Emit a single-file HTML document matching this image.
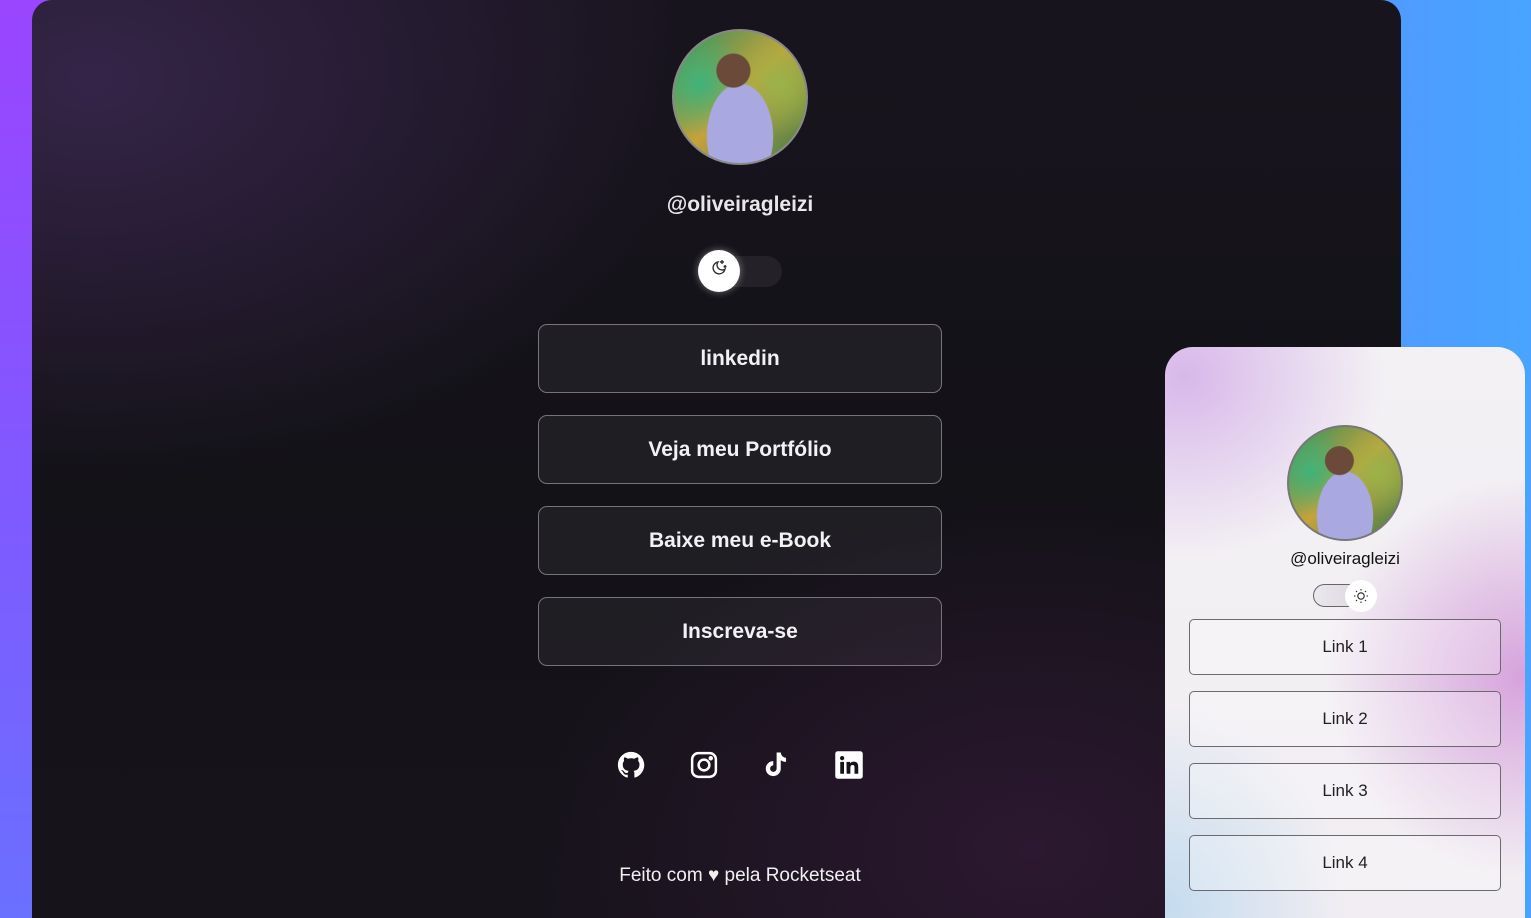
<!DOCTYPE html>
<html><head><meta charset="utf-8"><style>
*{margin:0;padding:0;box-sizing:border-box}
html,body{width:1531px;height:918px;overflow:hidden}
body{position:relative;font-family:"Liberation Sans",sans-serif;background:linear-gradient(90deg,#9a45ff 0%,#7a62ff 40%,#5a8cff 75%,#48a4ff 100%)}
.bgl{position:absolute;left:0;top:0;width:40px;height:918px;background:linear-gradient(180deg,#9a45ff,#7d5cff 60%,#6a70ff)}
.dark{position:absolute;left:32px;top:0;width:1369px;height:960px;border-radius:20px;background:radial-gradient(ellipse 600px 400px at 60px 80px,#352448 0%,rgba(30,22,40,0) 100%),radial-gradient(ellipse 500px 350px at 1000px 850px,#2c1830 0%,rgba(0,0,0,0) 100%),linear-gradient(180deg,#18141e,#131217 50%,#17131b);}
.av{position:absolute;border-radius:50%;overflow:hidden;border:2px solid #888;background:radial-gradient(circle at 45% 30%,#6b4a3a 0 14%,transparent 15%),radial-gradient(ellipse at 50% 80%,#a9a8e0 0 35%,transparent 36%),radial-gradient(circle at 20% 40%,#3fb37a,transparent 40%),radial-gradient(circle at 80% 40%,#9ab34a,transparent 40%),linear-gradient(135deg,#2e8f5f,#c7a23a 50%,#3c7c4c)}
.h{position:absolute;left:540px;width:400px;text-align:center;color:#e8e8ea;font-size:21px;font-weight:bold}
.btn{position:absolute;left:538px;width:404px;height:69px;border:1.5px solid #76747a;border-radius:9px;background:rgba(255,255,255,0.05);color:#f2f2f4;font-size:21px;font-weight:bold;display:flex;align-items:center;justify-content:center}
.light{position:absolute;left:1165px;top:347px;width:360px;height:600px;border-radius:28px;background:radial-gradient(ellipse 200px 180px at 20px 30px,#d8b8ea,transparent),radial-gradient(ellipse 200px 200px at 360px 330px,#d6a2dc,transparent),radial-gradient(ellipse 180px 200px at 0px 560px,#c4dcef,transparent),linear-gradient(#f3f1f4,#f1edf2)}
.lb{position:absolute;width:312px;height:56px;border:1px solid #6d6a6f;border-radius:5px;background:rgba(255,255,255,0.25);color:#222;font-size:17px;display:flex;align-items:center;justify-content:center}
</style></head><body>
<div class="bgl"></div>
<div class="dark"></div>
<div class="av" style="left:672px;top:29px;width:136px;height:136px"></div>
<div class="h" style="top:193px">@oliveiragleizi</div>
<div style="position:absolute;left:718px;top:256px;width:64px;height:31px;border-radius:16px;background:#242228"></div>
<div style="position:absolute;left:698px;top:250px;width:42px;height:42px;border-radius:50%;background:#fff;box-shadow:0 0 8px rgba(255,255,255,.4)"></div>
<svg style="position:absolute;left:709px;top:258px" width="20" height="20" viewBox="0 0 20 20" fill="none" stroke="#333" stroke-width="1.4"><path d="M9 4a6 6 0 1 0 7 7a5 5 0 0 1-7-7z"/><path d="M13 2v4M11 4h4M16 7v3M14.5 8.5h3"/></svg>
<div class="btn" style="top:324px">linkedin</div>
<div class="btn" style="top:415px">Veja meu Portfólio</div>
<div class="btn" style="top:506px">Baixe meu e-Book</div>
<div class="btn" style="top:597px">Inscreva-se</div>
<svg style="position:absolute;left:616px;top:750px" width="30" height="30" viewBox="0 0 24 24" fill="#fff"><path d="M12 1.5C6.2 1.5 1.5 6.2 1.5 12c0 4.6 3 8.6 7.2 10 .5.1.7-.2.7-.5v-1.8c-2.9.6-3.5-1.4-3.5-1.4-.5-1.2-1.2-1.5-1.2-1.5-1-.7.1-.7.1-.7 1 .1 1.6 1.1 1.6 1.1.9 1.6 2.5 1.2 3.1.9.1-.7.4-1.200.7-1.4-2.3-.3-4.8-1.2-4.8-5.2 0-1.100.4-2.100 1.100-2.800-.1-.3-.5-1.400.1-2.800 0 0 .9-.3 2.900 1.100a10 10 0 0 1 5.200 0c2-1.400 2.900-1.100 2.900-1.100.6 1.400.2 2.500.1 2.800.7.7 1.100 1.700 1.100 2.800 0 4-2.500 4.900-4.800 5.200.4.3.7 1 .7 1.900v2.900c0 .3.2.6.7.5 4.200-1.400 7.200-5.400 7.200-10C22.500 6.200 17.800 1.500 12 1.500z"/></svg>
<svg style="position:absolute;left:689px;top:750px" width="30" height="30" viewBox="0 0 24 24" fill="none" stroke="#fff" stroke-width="2"><rect x="2.5" y="2.5" width="19" height="19" rx="5"/><circle cx="12" cy="12" r="4.3"/><circle cx="17.4" cy="6.6" r=".8" fill="#fff"/></svg>
<svg style="position:absolute;left:761px;top:749px" width="30" height="32" viewBox="0 0 24 24" fill="#fff"><path d="M12.5 2h3.3c.3 2.4 1.8 4 4.2 4.2v3.3c-1.6 0-3-.5-4.2-1.3v6.7a6 6 0 1 1-6-6v3.4a2.6 2.6 0 1 0 2.7 2.6z"/></svg>
<svg style="position:absolute;left:834px;top:750px" width="30" height="30" viewBox="0 0 24 24"><rect x="1" y="1" width="22" height="22" rx="2" fill="#fff"/><path d="M5 9.5h3V19H5zM6.5 4.8a1.7 1.7 0 1 1 0 3.4a1.7 1.7 0 0 1 0-3.4zM10 9.5h2.9v1.3c.4-.8 1.4-1.5 2.9-1.5 3 0 3.6 2 3.6 4.6V19h-3v-4.5c0-1.1 0-2.5-1.5-2.5s-1.8 1.2-1.8 2.4V19h-3z" fill="#16141a"/></svg>
<div class="h" style="top:865px;font-size:19px;font-weight:normal;color:#f0f0f0">Feito com ♥ pela Rocketseat</div>
<div class="light"></div>
<div class="av" style="left:1287px;top:425px;width:116px;height:116px;border-color:#777"></div>
<div style="position:absolute;left:1165px;width:360px;top:549px;text-align:center;font-size:17px;color:#111">@oliveiragleizi</div>
<div style="position:absolute;left:1313px;top:584px;width:52px;height:23px;border-radius:12px;border:1px solid #666;background:linear-gradient(90deg,#ebe8ee,#dcd4e0)"></div>
<div style="position:absolute;left:1345px;top:580px;width:32px;height:32px;border-radius:50%;background:#fff"></div>
<svg style="position:absolute;left:1353px;top:588px" width="16" height="16" viewBox="0 0 16 16" fill="none" stroke="#222" stroke-width="1.1"><circle cx="8" cy="8" r="3.2"/><path d="M8 1v1.5M8 13.5V15M1 8h1.5M13.5 8H15M3 3l1 1M12 12l1 1M3 13l1-1M12 4l1-1"/></svg>
<div class="lb" style="left:1189px;top:619px">Link 1</div>
<div class="lb" style="left:1189px;top:691px">Link 2</div>
<div class="lb" style="left:1189px;top:763px">Link 3</div>
<div class="lb" style="left:1189px;top:835px">Link 4</div>
</body></html>
